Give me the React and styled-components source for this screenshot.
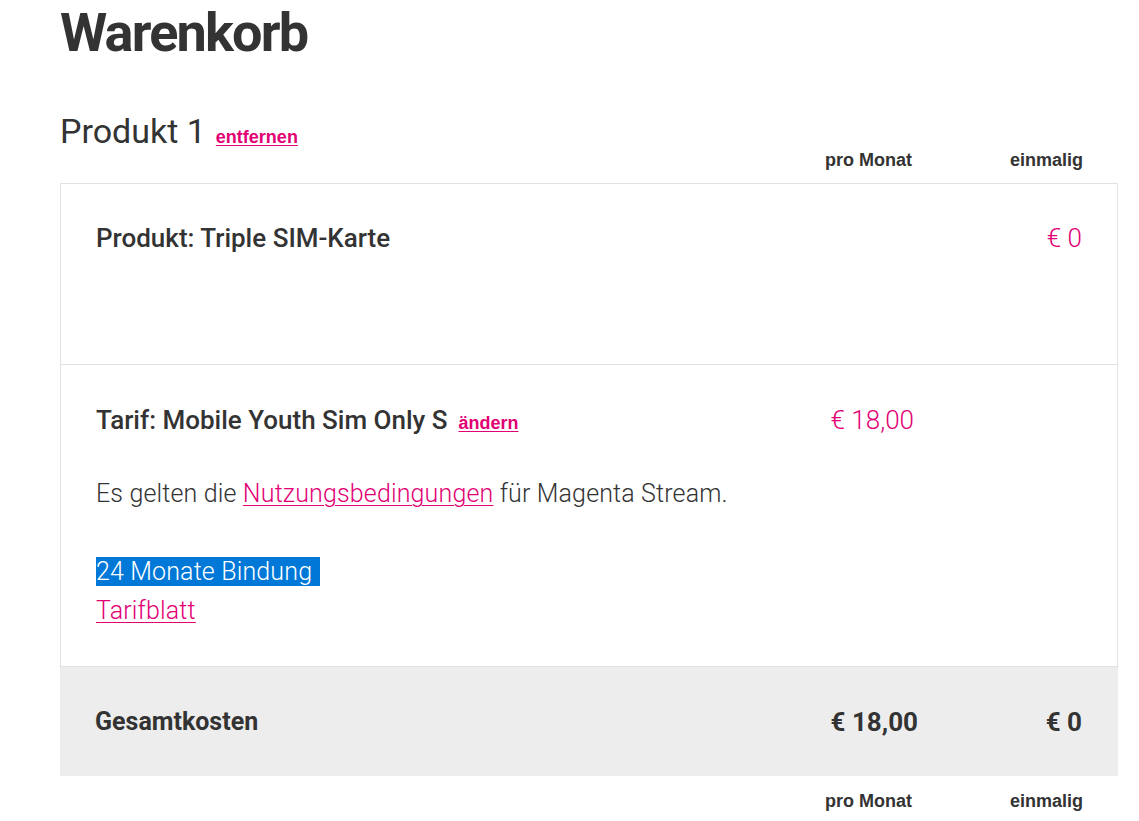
import React from 'react';
import styled, { createGlobalStyle } from 'styled-components';

const GlobalStyle = createGlobalStyle`
  body {
    margin: 0;
    background: #fff;
    color: #333;
    font-family: Roboto, "Liberation Sans", Arial, sans-serif;
  }
`;

const Page = styled.div`
  padding: 0 21px 0 60px;
`;

const Title = styled.h1`
  margin: 0;
  padding-top: 1px;
  font-size: 54px;
  line-height: 64px;
  font-weight: 700;
  letter-spacing: -1.8px;
`;

const ProductHead = styled.div`
  display: flex;
  align-items: baseline;
  gap: 10px;
  margin-top: 48px;
`;

const ProductTitle = styled.h2`
  margin: 0;
  font-size: 34px;
  line-height: 36px;
  font-weight: 400;
`;

const SmallLink = styled.a`
  font-family: "Liberation Sans", Arial, sans-serif;
  font-size: 18px;
  font-weight: 700;
  color: #e20074;
  text-decoration: underline;
  text-underline-offset: 2px;
  cursor: pointer;
`;

const Columns = styled.div`
  display: grid;
  grid-template-columns: 1fr 150px 168px;
  align-items: center;
  padding: 0 35px;
`;

const ColumnLabels = styled(Columns)`
  align-items: start;
  height: ${(p) => p.$height || 34}px;
  box-sizing: border-box;
  padding-top: ${(p) => p.$top || 0}px;
  font-family: "Liberation Sans", Arial, sans-serif;
  font-size: 18px;
  line-height: 22px;
  font-weight: 700;
  color: #333;

  span {
    text-align: right;
  }

  span:nth-of-type(1) {
    margin-right: 3px;
  }
`;

const Card = styled.div`
  border: 1px solid #e2e2e2;
  border-bottom: none;
`;

const Row = styled(Columns)`
  align-items: start;
  padding-top: ${(p) => p.$top}px;
  padding-bottom: ${(p) => p.$bottom}px;
  min-height: ${(p) => p.$minHeight || 0}px;
  box-sizing: border-box;
  border-bottom: 1px solid #e2e2e2;
`;

const ItemTitle = styled.div`
  display: flex;
  align-items: baseline;
  gap: 11px;
  font-size: 26px;
  line-height: 32px;
  font-weight: 500;
  color: #333;
`;

const Price = styled.div`
  text-align: right;
  font-size: 26px;
  line-height: 32px;
  font-weight: 300;
  color: #e20074;
`;

const Details = styled.div`
  grid-column: 1 / -1;
  font-size: 25px;
  font-weight: 300;
  line-height: 39px;
  letter-spacing: 0.15px;
  color: #333;
`;

const Note = styled.p`
  margin: 35px 0 0;
`;

const Binding = styled.p`
  margin: 39px 0 0;

  span {
    background: #0078d7;
    color: #fff;
    padding-right: 8px;
  }
`;

const TextLink = styled.a`
  color: #e20074;
  text-decoration: underline;
  text-underline-offset: 3px;
  text-decoration-thickness: 1px;
  cursor: pointer;
`;

const TotalRow = styled(Columns)`
  height: 109px;
  margin: 0 -1px;
  padding: 0 36px 0 35px;
  background: #ededed;
  font-size: 25px;
  font-weight: 700;
  color: #333;

  span {
    text-align: right;
    font-size: 26px;
  }

  span:nth-of-type(1) {
    margin-right: -4px;
  }
`;

export default function App() {
  return (
    <Page>
      <GlobalStyle />
      <Title>Warenkorb</Title>

      <ProductHead>
        <ProductTitle>Produkt 1</ProductTitle>
        <SmallLink>entfernen</SmallLink>
      </ProductHead>

      <ColumnLabels>
        <div />
        <span>pro Monat</span>
        <span>einmalig</span>
      </ColumnLabels>

      <Card>
        <Row $top={38} $bottom={38} $minHeight={181}>
          <ItemTitle>Produkt: Triple SIM-Karte</ItemTitle>
          <div />
          <Price>€ 0</Price>
        </Row>

        <Row $top={39} $bottom={36}>
          <ItemTitle>
            Tarif: Mobile Youth Sim Only S
            <SmallLink>ändern</SmallLink>
          </ItemTitle>
          <Price>€ 18,00</Price>
          <div />
          <Details>
            <Note>
              Es gelten die <TextLink>Nutzungsbedingungen</TextLink> für Magenta Stream.
            </Note>
            <Binding>
              <span>24 Monate Bindung</span>
              <br />
              <TextLink>Tarifblatt</TextLink>
            </Binding>
          </Details>
        </Row>

        <TotalRow>
          <div>Gesamtkosten</div>
          <span>€ 18,00</span>
          <span>€ 0</span>
        </TotalRow>
      </Card>

      <ColumnLabels $top={14} $height={46}>
        <div />
        <span>pro Monat</span>
        <span>einmalig</span>
      </ColumnLabels>
    </Page>
  );
}
